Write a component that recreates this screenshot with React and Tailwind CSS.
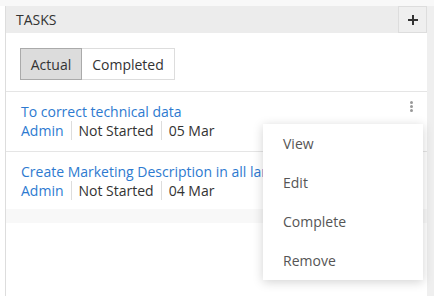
import React from "react";

const tasks = [
    { title: "To correct technical data", user: "Admin", status: "Not Started", date: "05 Mar" },
    { title: "Create Marketing Description in all languages", user: "Admin", status: "Not Started", date: "04 Mar" },
];

function Kebab() {
    return (
        <div className="flex flex-col items-center gap-[1px]">
            <span className="w-[3px] h-[3px] rounded-full bg-[#999]" />
            <span className="w-[3px] h-[3px] rounded-full bg-[#999]" />
            <span className="w-[3px] h-[3px] rounded-full bg-[#999]" />
        </div>
    );
}

export default function App() {
    return (
        <div
            className="relative w-[434px] h-[296px] overflow-hidden bg-white flex flex-col text-[14px] text-[#333]"
            style={{ fontFamily: '"Open Sans", "Liberation Sans", sans-serif' }}
        >
            <div className="h-[6px] bg-[#f8f8f8]" />
            <div className="flex flex-1">
                <div className="w-[5px]" />
                <div className="w-[422px] border-l border-[#ddd] flex flex-col">
                    <div className="h-[27px] bg-[#ececec] flex items-center justify-between">
                        <span className="pl-[10px] text-[14px] text-[#333]">TASKS</span>
                        <button className="w-[29px] h-[27px] border border-[#ddd] bg-[#efefef] flex items-center justify-center">
                            <svg width="12" height="12" viewBox="0 0 12 12">
                                <path d="M6 1v10M1 6h10" stroke="#333" strokeWidth="2" />
                            </svg>
                        </button>
                    </div>
                    <div className="pt-[15px] pl-[14px] pb-[11px] border-b border-[#e5e5e5]">
                        <div className="flex h-[32px]">
                            <div className="w-[62px] flex items-center justify-center bg-[#dcdcdc] border border-[#aaa] text-[#333]">Actual</div>
                            <div className="w-[93px] flex items-center justify-center bg-white border border-l-0 border-[#ddd] text-[#333]">Completed</div>
                        </div>
                    </div>
                    {tasks.map((t, i) => (
                        <div key={i} className={"relative pl-[15px] pr-[30px] pt-[10px] " + (i === 0 ? "pb-[11px] border-b border-[#e5e5e5]" : "pb-[9px]")}>
                            <div className="leading-[19px] text-[#2d7ad0] whitespace-nowrap">{t.title}</div>
                            <div className="flex items-center leading-[19px] whitespace-nowrap">
                                <span className="text-[#2d7ad0] pr-[7px] border-r border-[#ddd]">{t.user}</span>
                                <span className="px-[7px] border-r border-[#ddd]">{t.status}</span>
                                <span className="pl-[7px]">{t.date}</span>
                            </div>
                            {i === 0 && (
                                <div className="absolute right-[14px] top-[9px]">
                                    <Kebab />
                                </div>
                            )}
                        </div>
                    ))}
                    <div className="h-[14px] bg-[#f8f8f8]" />
                    <div className="flex-1 bg-white" />
                </div>
                <div className="flex-1 bg-[#efefef]" />
            </div>

            <div className="absolute left-[263px] top-[124px] w-[160px] bg-white shadow-[0_2px_10px_rgba(0,0,0,0.18)] text-[#555]">
                {["View", "Edit", "Complete", "Remove"].map((label) => (
                    <div key={label} className="h-[39px] flex items-center pl-[20px]">{label}</div>
                ))}
            </div>
        </div>
    );
}
